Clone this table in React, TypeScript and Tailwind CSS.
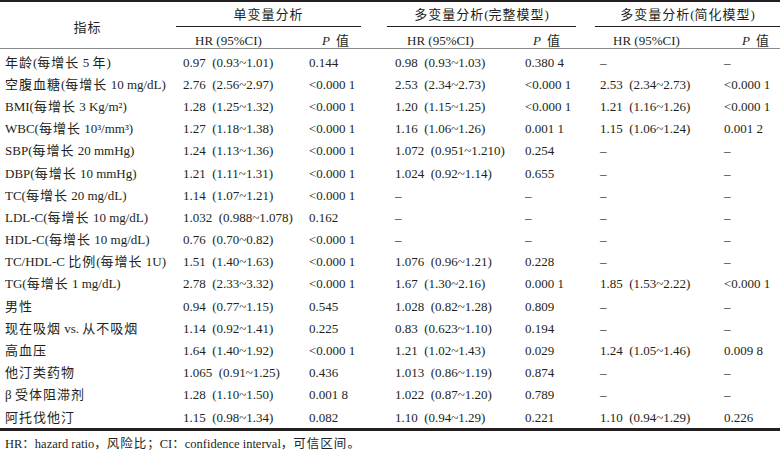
import type { ReactNode } from 'react';

type Row = [string, string, string, string, string, string, string];

const ROWS: Row[] = [
  ['年龄(每增长 5 年)', '0.97 (0.93~1.01)', '0.144', '0.98 (0.93~1.03)', '0.380 4', '–', '–'],
  ['空腹血糖(每增长 10 mg/dL)', '2.76 (2.56~2.97)', '<0.000 1', '2.53 (2.34~2.73)', '<0.000 1', '2.53 (2.34~2.73)', '<0.000 1'],
  ['BMI(每增长 3 Kg/m²)', '1.28 (1.25~1.32)', '<0.000 1', '1.20 (1.15~1.25)', '<0.000 1', '1.21 (1.16~1.26)', '<0.000 1'],
  ['WBC(每增长 10³/mm³)', '1.27 (1.18~1.38)', '<0.000 1', '1.16 (1.06~1.26)', '0.001 1', '1.15 (1.06~1.24)', '0.001 2'],
  ['SBP(每增长 20 mmHg)', '1.24 (1.13~1.36)', '<0.000 1', '1.072 (0.951~1.210)', '0.254', '–', '–'],
  ['DBP(每增长 10 mmHg)', '1.21 (1.11~1.31)', '<0.000 1', '1.024 (0.92~1.14)', '0.655', '–', '–'],
  ['TC(每增长 20 mg/dL)', '1.14 (1.07~1.21)', '<0.000 1', '–', '–', '–', '–'],
  ['LDL-C(每增长 10 mg/dL)', '1.032 (0.988~1.078)', '0.162', '–', '–', '–', '–'],
  ['HDL-C(每增长 10 mg/dL)', '0.76 (0.70~0.82)', '<0.000 1', '–', '–', '–', '–'],
  ['TC/HDL-C 比例(每增长 1U)', '1.51 (1.40~1.63)', '<0.000 1', '1.076 (0.96~1.21)', '0.228', '–', '–'],
  ['TG(每增长 1 mg/dL)', '2.78 (2.33~3.32)', '<0.000 1', '1.67 (1.30~2.16)', '0.000 1', '1.85 (1.53~2.22)', '<0.000 1'],
  ['男性', '0.94 (0.77~1.15)', '0.545', '1.028 (0.82~1.28)', '0.809', '–', '–'],
  ['现在吸烟 vs. 从不吸烟', '1.14 (0.92~1.41)', '0.225', '0.83 (0.623~1.10)', '0.194', '–', '–'],
  ['高血压', '1.64 (1.40~1.92)', '<0.000 1', '1.21 (1.02~1.43)', '0.029', '1.24 (1.05~1.46)', '0.009 8'],
  ['他汀类药物', '1.065 (0.91~1.25)', '0.436', '1.013 (0.86~1.19)', '0.874', '–', '–'],
  ['β 受体阻滞剂', '1.28 (1.10~1.50)', '0.001 8', '1.022 (0.87~1.20)', '0.789', '–', '–'],
  ['阿托伐他汀', '1.15 (0.98~1.34)', '0.082', '1.10 (0.94~1.29)', '0.221', '1.10 (0.94~1.29)', '0.226'],
];

const PAD = ['pl-[5px]', 'pl-[8px]', 'pl-[9px]', 'pl-[8px]', 'pl-[8px]', 'pl-[8px]', 'pl-[7px]'];

// spread out the chinese characters a little, like the typeset table
function Zh({ text }: { text: string }) {
  const parts = text.split(/([\u4e00-\u9fff]+)/);
  const out: ReactNode[] = parts.map((p, i) =>
    /[\u4e00-\u9fff]/.test(p) ? (
      <span key={i} className="tracking-[1px]">
        {p}
      </span>
    ) : (
      p
    )
  );
  return <>{out}</>;
}

function P() {
  return (
    <>
      <span className="italic mr-[6px]">P</span>
      <Zh text="值" />
    </>
  );
}

export default function App() {
  return (
    <div className="w-[780px] h-[452px] overflow-hidden bg-white text-[13px] leading-none text-[#231f20] font-['Liberation_Serif','Noto_Sans_CJK_SC',serif]">
      <div className="grid grid-cols-[175px_125px_87px_130px_75px_125px_63px] grid-rows-[25px_21px] border-t-2 border-b border-t-[#231f20] border-b-[#8c8c8c] whitespace-nowrap">
        <div className="row-span-2 flex items-center justify-center pt-[4px]">
          <Zh text="指标" />
        </div>

        <div className="col-span-2 ml-[1px] mr-[26px] flex items-center justify-center border-b border-[#231f20]">
          <Zh text="单变量分析" />
        </div>
        <div className="col-span-2 mr-[16px] flex items-center justify-center border-b border-[#231f20]">
          <Zh text="多变量分析(完整模型)" />
        </div>
        <div className="col-span-2 ml-[3px] flex items-center justify-center border-b border-[#231f20]">
          <Zh text="多变量分析(简化模型)" />
        </div>

        <div className="flex items-center pl-[20px] pt-[5px]">HR (95%CI)</div>
        <div className="flex items-center pl-[22px] pt-[5px]">
          <P />
        </div>
        <div className="flex items-center pl-[20px] pt-[5px]">HR (95%CI)</div>
        <div className="flex items-center pl-[16px] pt-[5px]">
          <P />
        </div>
        <div className="flex items-center pl-[21px] pt-[5px]">HR (95%CI)</div>
        <div className="flex items-center pl-[25px] pt-[5px]">
          <P />
        </div>
      </div>

      <div className="border-b-[3px] border-[#231f20] pt-[2px] whitespace-nowrap">
        {ROWS.map((row) => (
          <div
            key={row[0]}
            className="grid h-[22.2px] grid-cols-[175px_125px_87px_130px_75px_125px_63px] items-center"
          >
            {row.map((cell, i) => (
              <div key={i} className={PAD[i]}>
                {i === 0 ? <Zh text={cell} /> : cell.replace(' (', '\u2002(')}
              </div>
            ))}
          </div>
        ))}
      </div>

      <p className="pl-[5px] pt-[7px] text-[12.5px]">
        HR：hazard ratio，<Zh text="风险比" />；CI：confidence interval，<Zh text="可信区间" />。
      </p>
    </div>
  );
}
